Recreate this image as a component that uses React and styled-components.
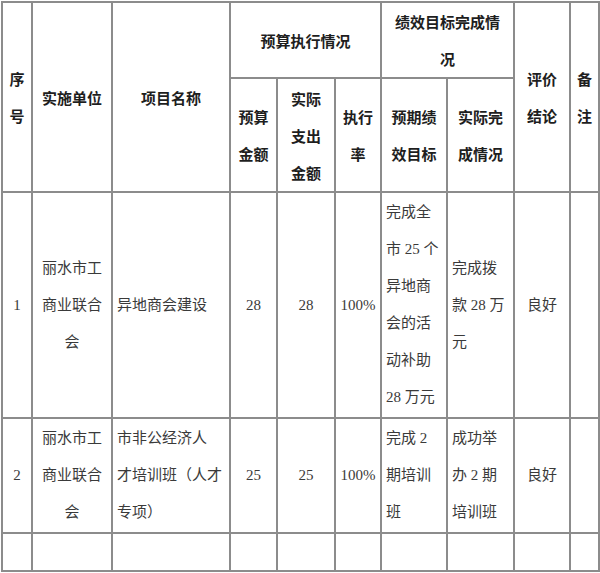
import React from 'react';
import styled, { createGlobalStyle } from 'styled-components';

const GlobalStyle = createGlobalStyle`
  html, body {
    margin: 0;
    padding: 0;
    background: #fff;
  }
`

/* Table */

const Page = styled.div`
  padding: 1px 0 0 1px;
`

const Table = styled.table`
  border-collapse: collapse;
  table-layout: fixed;
  width: 597px;
  font-size: 15px;
`

const Row = styled.tr`
  height: ${(p) => p.$h}px;
`

const Th = styled.th`
  border: 2px solid #8c8c8c;
  padding: 0 6px;
  font-family: "Noto Sans CJK SC", sans-serif;
  font-weight: 700;
  color: #1e1e1e;
  text-align: center;
  vertical-align: middle;
  word-break: break-all;
  line-height: 37px;
`

const Td = styled.td`
  border: 2px solid #8c8c8c;
  padding: 0 4px;
  font-family: "Liberation Serif", "Noto Sans CJK SC", serif;
  font-weight: 400;
  color: #3a3a3a;
  text-align: ${(p) => p.$align || 'center'};
  vertical-align: middle;
  word-break: break-all;
  white-space: pre-line;
  line-height: 37px;
`

const widths = [30, 80, 118, 47, 58, 46, 66, 67, 56, 29]

const rows = [
  {
    h: 226,
    no: '1',
    unit: '丽水市工商业联合会',
    name: '异地商会建设',
    budget: '28',
    spent: '28',
    rate: '100%',
    goal: '完成全市 25 个异地商会的活动补助 28 万元',
    done: '完成拨款 28 万元',
    result: '良好',
  },
  {
    h: 115,
    no: '2',
    unit: '丽水市工商业联合会',
    name: '市非公经济人\n才培训班（人才\n专项）',
    budget: '25',
    spent: '25',
    rate: '100%',
    goal: '完成 2 期培训班',
    done: '成功举办 2 期培训班',
    result: '良好',
  },
]

export default function App() {
  return (
    <Page>
      <GlobalStyle />
      <Table>
        <colgroup>
          {widths.map((w, i) => (
            <col key={i} style={{ width: w }} />
          ))}
        </colgroup>
        <thead>
          <Row $h={76}>
            <Th rowSpan={2}>序号</Th>
            <Th rowSpan={2}>实施单位</Th>
            <Th rowSpan={2}>项目名称</Th>
            <Th colSpan={3}>预算执行情况</Th>
            <Th colSpan={2}>绩效目标完成情况</Th>
            <Th rowSpan={2}>评价结论</Th>
            <Th rowSpan={2}>备注</Th>
          </Row>
          <Row $h={114}>
            <Th>预算金额</Th>
            <Th>实际支出金额</Th>
            <Th>执行率</Th>
            <Th>预期绩效目标</Th>
            <Th>实际完成情况</Th>
          </Row>
        </thead>
        <tbody>
          {rows.map((r) => (
            <Row key={r.no} $h={r.h}>
              <Td>{r.no}</Td>
              <Td>{r.unit}</Td>
              <Td $align="left">{r.name}</Td>
              <Td>{r.budget}</Td>
              <Td>{r.spent}</Td>
              <Td>{r.rate}</Td>
              <Td $align="left">{r.goal}</Td>
              <Td $align="left">{r.done}</Td>
              <Td>{r.result}</Td>
              <Td></Td>
            </Row>
          ))}
          <Row $h={38}>
            {widths.map((w, i) => (
              <Td key={i}></Td>
            ))}
          </Row>
        </tbody>
      </Table>
    </Page>
  )
}
